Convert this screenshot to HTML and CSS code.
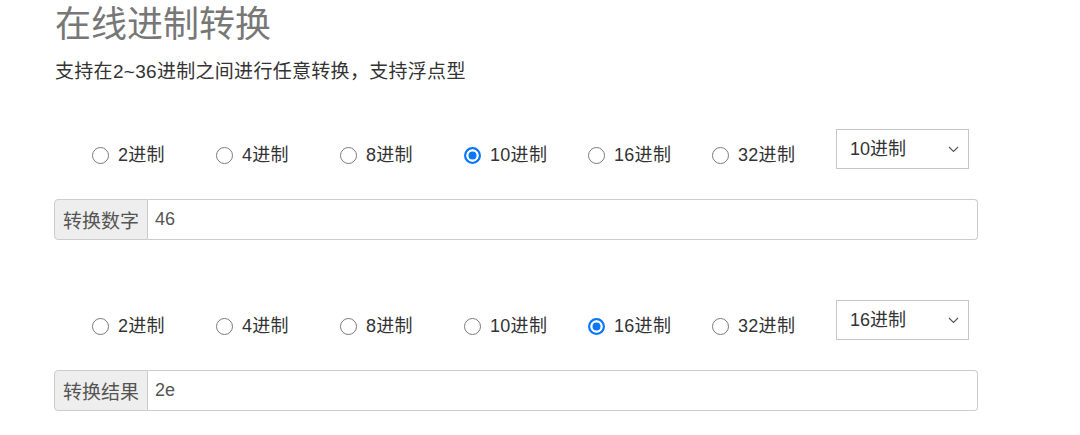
FILE: index.html
```html
<!DOCTYPE html>
<html lang="zh-CN">
<head>
<meta charset="utf-8">
<title>在线进制转换</title>
<link rel="stylesheet" href="styles.css">
</head>
<body>
<div class="container">
  <h1 class="title">在线进制转换</h1>
  <p class="subtitle">支持在2~36进制之间进行任意转换，支持浮点型</p>

  <div class="base-row first">
    <div class="radios">
      <label class="radio"><span class="dot"></span><span>2进制</span></label>
      <label class="radio"><span class="dot"></span><span>4进制</span></label>
      <label class="radio"><span class="dot"></span><span>8进制</span></label>
      <label class="radio"><span class="dot on"></span><span>10进制</span></label>
      <label class="radio"><span class="dot"></span><span>16进制</span></label>
      <label class="radio"><span class="dot"></span><span>32进制</span></label>
    </div>
    <div class="select">
      <span>10进制</span>
      <svg class="chev" width="11" height="7" viewBox="0 0 11 7"><polyline points="1,1 5.5,5.5 10,1" fill="none" stroke="#555" stroke-width="1.1"/></svg>
    </div>
  </div>

  <div class="input-group">
    <span class="addon">转换数字</span>
    <input class="field" type="text" value="46">
  </div>

  <div class="base-row second">
    <div class="radios">
      <label class="radio"><span class="dot"></span><span>2进制</span></label>
      <label class="radio"><span class="dot"></span><span>4进制</span></label>
      <label class="radio"><span class="dot"></span><span>8进制</span></label>
      <label class="radio"><span class="dot"></span><span>10进制</span></label>
      <label class="radio"><span class="dot on"></span><span>16进制</span></label>
      <label class="radio"><span class="dot"></span><span>32进制</span></label>
    </div>
    <div class="select">
      <span>16进制</span>
      <svg class="chev" width="11" height="7" viewBox="0 0 11 7"><polyline points="1,1 5.5,5.5 10,1" fill="none" stroke="#555" stroke-width="1.1"/></svg>
    </div>
  </div>

  <div class="input-group">
    <span class="addon">转换结果</span>
    <input class="field" type="text" value="2e">
  </div>
</div>
</body>
</html>
```

FILE: styles.css
```css
* { box-sizing: border-box; }

html, body {
  margin: 0;
  padding: 0;
  background: #fff;
}

body {
  font-family: "Liberation Sans", "Noto Sans CJK SC", sans-serif;
  color: #333;
}

.container {
  padding: 0 102px 0 54px;
}

.title {
  margin: 0;
  padding: 5px 0 0 1px;
  font-size: 36px;
  line-height: 40px;
  font-weight: normal;
  color: #777;
}

.subtitle {
  margin: 14px 0 0 1px;
  font-size: 19px;
  line-height: 26px;
  letter-spacing: 0.3px;
  color: #333;
}

.base-row {
  display: flex;
  align-items: flex-start;
}

.base-row.first { margin-top: 44px; }
.base-row.second { margin-top: 60px; }

.radios {
  display: flex;
  margin-left: 38px;
  padding-top: 14px;
}

.radio {
  width: 124px;
  display: flex;
  align-items: center;
  height: 24px;
  font-size: 18px;
  line-height: 24px;
  letter-spacing: 0.3px;
  color: #333;
}

.dot {
  display: block;
  width: 17px;
  height: 17px;
  margin-right: 9px;
  border: 1.3px solid #7a7a7a;
  border-radius: 50%;
  background: #fff;
  flex: none;
}

.dot.on {
  border: 2px solid #0b76fb;
  background: #0b76fb;
  box-shadow: inset 0 0 0 2.5px #fff;
}

.select {
  width: 133px;
  height: 40px;
  border: 1px solid #c6c6c6;
  background: #fff;
  display: flex;
  align-items: center;
  justify-content: space-between;
  padding: 0 9px 0 13px;
  font-size: 18px;
  color: #333;
  line-height: 24px;
}

.chev { display: block; }

.input-group {
  display: flex;
  margin-top: 30px;
  height: 41px;
}

.addon {
  flex: none;
  width: 94px;
  display: flex;
  align-items: center;
  justify-content: center;
  background: #eee;
  border: 1px solid #ccc;
  border-radius: 4px 0 0 4px;
  font-size: 19px;
  color: #555;
}

.field {
  flex: 1;
  min-width: 0;
  height: 100%;
  border: 1px solid #ccc;
  border-left: 0;
  border-radius: 0 4px 4px 0;
  padding: 0 7px;
  font-family: "Liberation Sans", "Noto Sans CJK SC", sans-serif;
  font-size: 18px;
  color: #555;
  background: #fff;
  outline: none;
}
```
